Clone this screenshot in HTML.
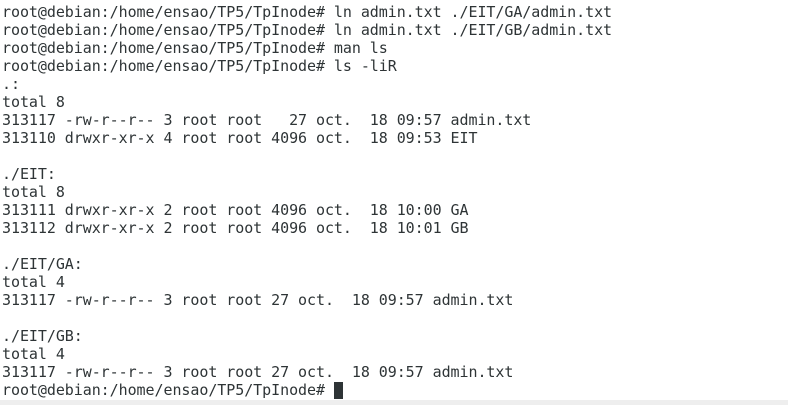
<!DOCTYPE html>
<html><head><style>
html,body{margin:0;padding:0;background:#fff;width:788px;height:405px;overflow:hidden}
pre{margin:0;position:absolute;left:2px;top:3px;font-family:"DejaVu Sans Mono","Liberation Mono",monospace;font-size:15px;line-height:18px;letter-spacing:-0.06px;color:#2e3436}
.bar{position:absolute;left:0;top:400px;width:788px;height:5px;background:#eeeeee}
.cur{display:inline-block;width:9px;height:17px;background:#2e3436;vertical-align:-4px}
</style></head><body>
<pre>root@debian:/home/ensao/TP5/TpInode# ln admin.txt ./EIT/GA/admin.txt
root@debian:/home/ensao/TP5/TpInode# ln admin.txt ./EIT/GB/admin.txt
root@debian:/home/ensao/TP5/TpInode# man ls
root@debian:/home/ensao/TP5/TpInode# ls -liR
.:
total 8
313117 -rw-r--r-- 3 root root   27 oct.  18 09:57 admin.txt
313110 drwxr-xr-x 4 root root 4096 oct.  18 09:53 EIT

./EIT:
total 8
313111 drwxr-xr-x 2 root root 4096 oct.  18 10:00 GA
313112 drwxr-xr-x 2 root root 4096 oct.  18 10:01 GB

./EIT/GA:
total 4
313117 -rw-r--r-- 3 root root 27 oct.  18 09:57 admin.txt

./EIT/GB:
total 4
313117 -rw-r--r-- 3 root root 27 oct.  18 09:57 admin.txt
root@debian:/home/ensao/TP5/TpInode# <span class="cur"></span></pre>
<div class="bar"></div>
</body></html>
